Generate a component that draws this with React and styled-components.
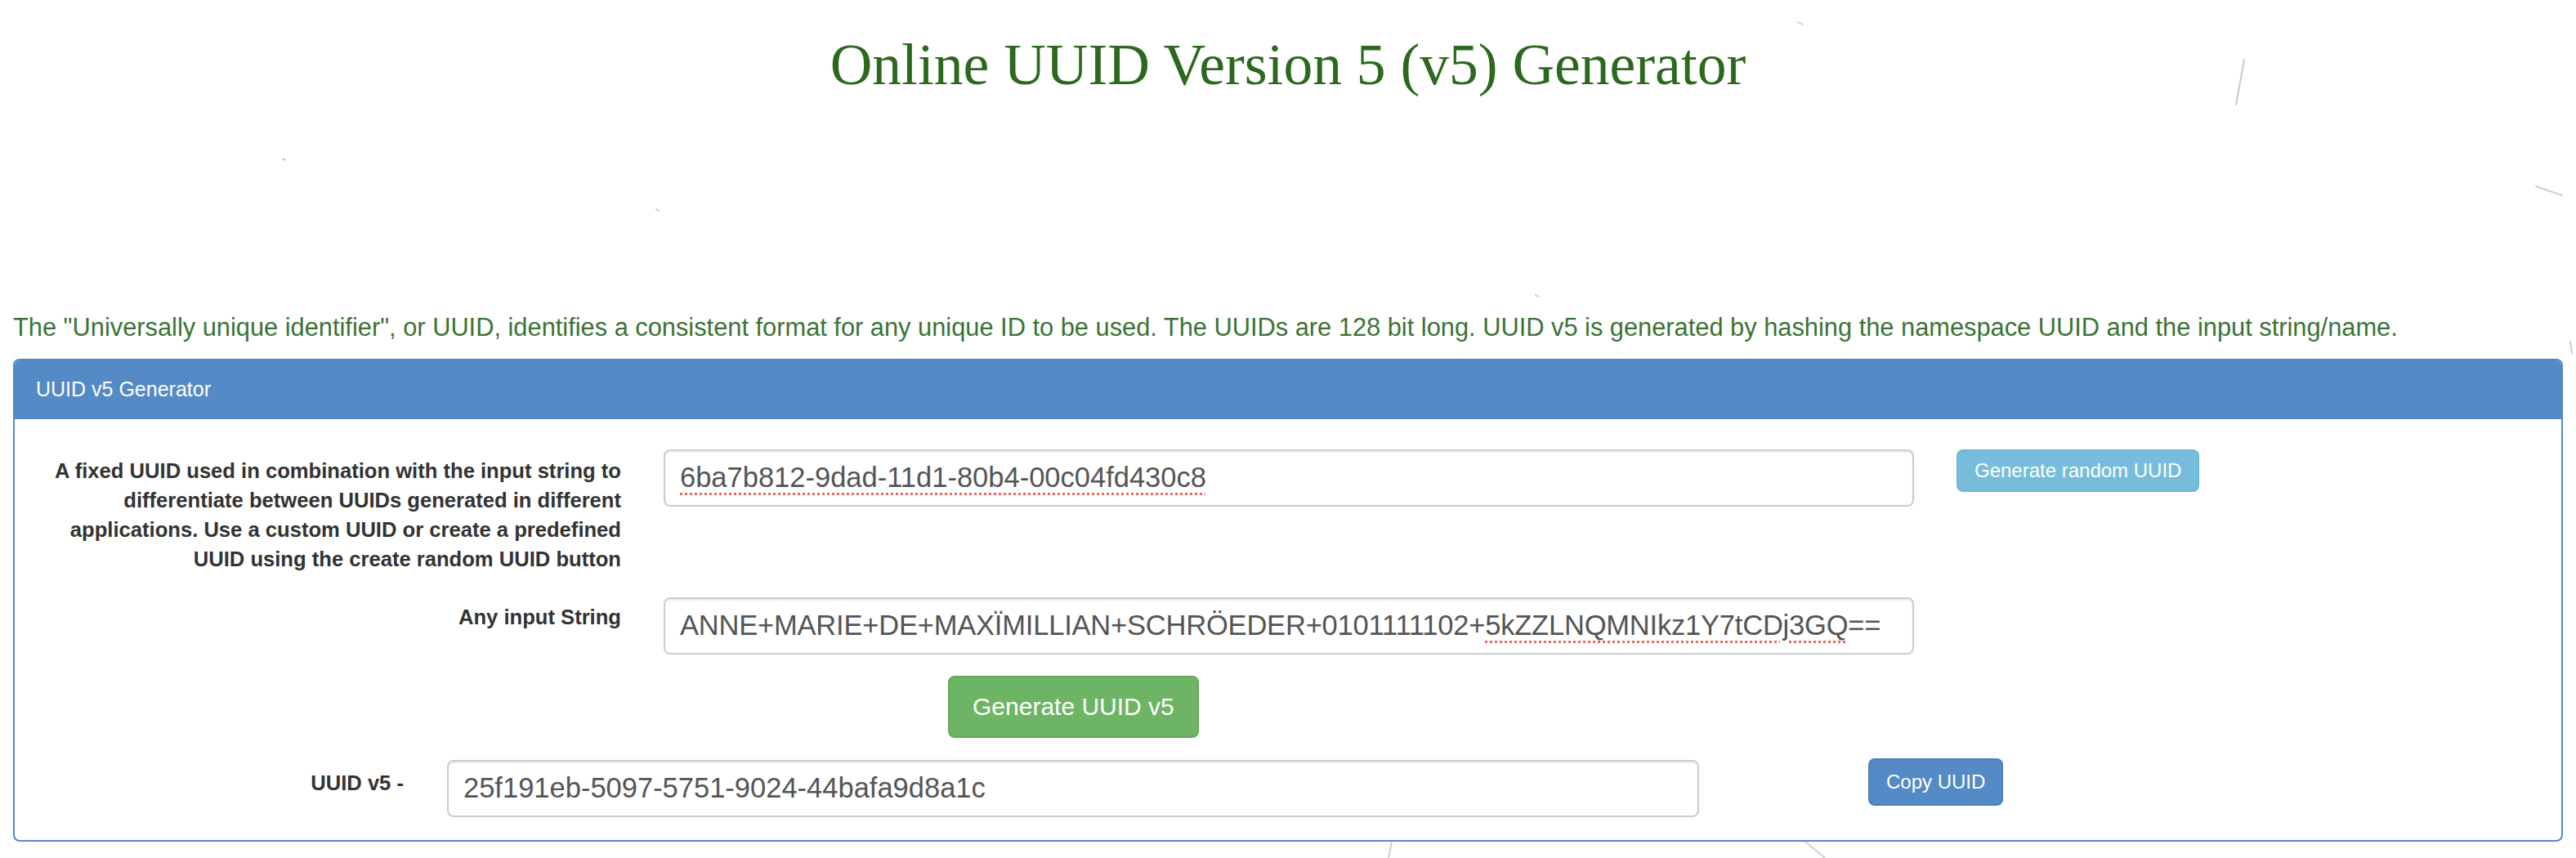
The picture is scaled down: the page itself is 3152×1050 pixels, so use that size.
import React from 'react';
import styled, { createGlobalStyle } from 'styled-components';

const GlobalStyle = createGlobalStyle`
  body {
    margin: 0;
    background: #fff;
    font-family: "Liberation Sans", Arial, sans-serif;
    color: #333;
  }
`;

const Page = styled.div`
  position: relative;
  min-height: 1050px;
  padding: 0 16px;
  overflow: hidden;
`;

const Particles = styled.svg`
  position: absolute;
  top: 0;
  left: 0;
  width: 3152px;
  height: 1050px;
  pointer-events: none;
  z-index: 0;
`;

const Content = styled.div`
  position: relative;
  z-index: 1;
`;

const Title = styled.h1`
  margin: 40px 0 0;
  font-family: "Liberation Serif", "Times New Roman", serif;
  font-weight: 400;
  font-size: 71.5px;
  line-height: 1.1;
  color: #2c681e;
  text-align: center;
`;

const Intro = styled.p`
  margin: 262px 0 0;
  font-size: 30.8px;
  line-height: 40px;
  color: #3c7335;
  white-space: nowrap;
`;

const Panel = styled.section`
  margin-top: 18px;
  border: 2px solid #548ac6;
  border-radius: 8px;
  background: #fff;
  overflow: hidden;
`;

const PanelHeading = styled.div`
  display: flex;
  align-items: center;
  height: 72px;
  padding: 0 26px;
  background: #548ac6;
  color: #fff;
  font-size: 25px;
`;

const PanelBody = styled.div`
  padding: 37px 0 28px 30px;
`;

const FormRow = styled.div`
  display: grid;
  grid-template-columns: ${(p) => p.$cols};
  column-gap: ${(p) => p.$gap}px;
  align-items: start;
  margin-top: ${(p) => p.$top || 0}px;
`;

const Label = styled.label`
  padding-top: ${(p) => p.$pad || 9}px;
  font-size: 25.6px;
  line-height: 36px;
  font-weight: 700;
  color: #333;
  text-align: right;
`;

const Field = styled.div`
  box-sizing: border-box;
  height: 70px;
  display: flex;
  align-items: center;
  padding: 0 18px;
  border: 2px solid #ccc;
  border-radius: 8px;
  box-shadow: inset 0 2px 2px rgba(0, 0, 0, 0.075);
  font-size: 34.5px;
  letter-spacing: ${(p) => p.$tight ? '-0.2px' : '0'};
  color: #555;
  white-space: nowrap;
  overflow: hidden;
`;

const Misspelled = styled.span`
  text-decoration: underline dotted #ea6a60;
  text-decoration-thickness: 3px;
  text-underline-offset: 7px;
`;

const Button = styled.button`
  box-sizing: border-box;
  height: ${(p) => p.$h}px;
  padding: 0 ${(p) => p.$px}px;
  border: 2px solid ${(p) => p.$border};
  border-radius: 8px;
  background: ${(p) => p.$bg};
  color: #fff;
  font-family: "Liberation Sans", Arial, sans-serif;
  font-size: ${(p) => p.$fs}px;
  white-space: nowrap;
  cursor: pointer;
  justify-self: start;
`;

const GenerateButton = styled(Button)`
  margin-left: 348px;
`;

const CopyButton = styled(Button)`
  margin-top: -2px;
  margin-left: 154px;
`;

const lines = [
  [2746, 73, 2736, 128, '#c8c8c8'],
  [3103, 228, 3135, 239, '#cfcfcf'],
  [3145, 418, 3147, 432, '#cfcfcf'],
  [1703, 1030, 1699, 1050, '#cfcfcf'],
  [2209, 1030, 2233, 1050, '#cfcfcf'],
  [346, 194, 349, 196, '#c8c8c8'],
  [803, 256, 806, 258, '#c8c8c8'],
  [1879, 361, 1882, 363, '#c8c8c8'],
  [2199, 27, 2206, 30, '#d8d8d8'],
];

const App = () => (
  <>
    <GlobalStyle />
    <Page>
      <Particles viewBox="0 0 3152 1050">
        {lines.map(([x1, y1, x2, y2, c], i) => (
          <line key={i} x1={x1} y1={y1} x2={x2} y2={y2} stroke={c} strokeWidth="2" strokeLinecap="round" />
        ))}
      </Particles>
      <Content>
        <Title>Online UUID Version 5 (v5) Generator</Title>
        <Intro>
          The "Universally unique identifier", or UUID, identifies a consistent format for any unique ID to be used. The
          UUIDs are 128 bit long. UUID v5 is generated by hashing the namespace UUID and the input string/name.
        </Intro>
        <Panel>
          <PanelHeading>UUID v5 Generator</PanelHeading>
          <PanelBody>
            <FormRow $cols="712px 1530px 294px" $gap={52}>
              <Label $pad={8}>
                A fixed UUID used in combination with the input string to differentiate between UUIDs generated in
                different applications. Use a custom UUID or create a predefined UUID using the create random UUID button
              </Label>
              <Field>
                <Misspelled>6ba7b812-9dad-11d1-80b4-00c04fd430c8</Misspelled>
              </Field>
              <Button $h={52} $px={20} $fs={24} $bg="#76bddb" $border="#6cb6d6">
                Generate random UUID
              </Button>
            </FormRow>
            <FormRow $cols="712px 1530px 294px" $gap={52} $top={29}>
              <Label $pad={6}>Any input String</Label>
              <Field $tight>
                ANNE+MARIE+DE+MAXÏMILLIAN+SCHRÖEDER+0101111102+<Misspelled>5kZZLNQMNIkz1Y7tCDj3GQ</Misspelled>==
              </Field>
            </FormRow>
            <FormRow $cols="712px 1530px" $gap={52} $top={26}>
              <span />
              <GenerateButton $h={76} $px={28} $fs={30} $bg="#6db564" $border="#62aa59">
                Generate UUID v5
              </GenerateButton>
            </FormRow>
            <FormRow $cols="446px 1532px auto" $gap={53} $top={27}>
              <Label $pad={10}>UUID v5 -</Label>
              <Field>25f191eb-5097-5751-9024-44bafa9d8a1c</Field>
              <CopyButton $h={58} $px={20} $fs={24} $bg="#548ac6" $border="#4a7eb9">
                Copy UUID
              </CopyButton>
            </FormRow>
          </PanelBody>
        </Panel>
      </Content>
    </Page>
  </>
);

export default App;
